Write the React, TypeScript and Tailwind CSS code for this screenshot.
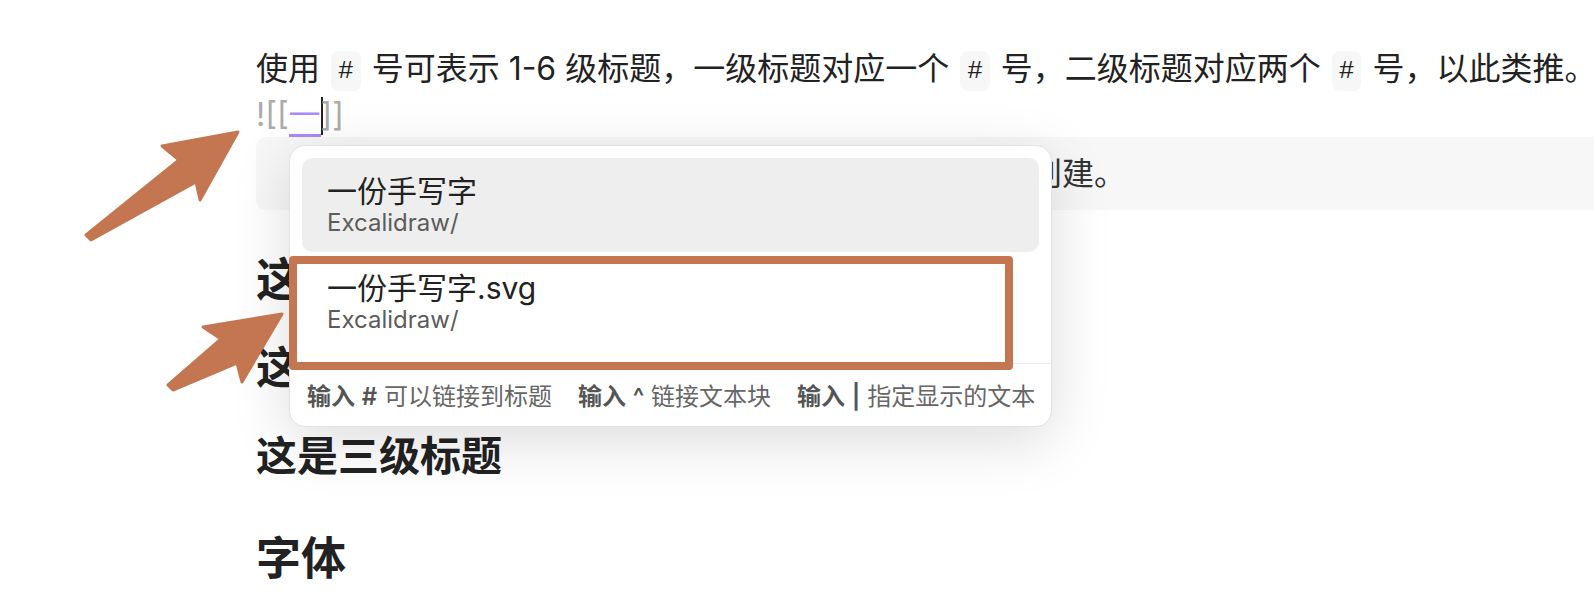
import React from 'react';

const font = { fontFamily: 'Inter, "Noto Sans CJK SC", sans-serif' };

function Code({ children }: { children: React.ReactNode }) {
  return (
    <span className="mx-[2px] inline-flex h-[40px] items-center rounded-[8px] bg-[#f7f7f7] px-[7px] align-middle font-['Liberation_Mono',monospace] text-[26px] text-[#222]">
      {children}
    </span>
  );
}

function SuggestItem({ title, active }: { title: string; active?: boolean }) {
  return (
    <div className={`h-[94px] rounded-[10px] pl-[25px] pt-[15px] ${active ? 'bg-[#eeeeee]' : ''}`}>
      <div className="text-[30px] leading-[36px] text-[#222]">{title}</div>
      <div className="text-[24px] leading-[28px] text-[#5c5c5c]">Excalidraw/</div>
    </div>
  );
}

function Hint({ keyText, label }: { keyText: string; label: string }) {
  return (
    <span className="whitespace-nowrap text-[#666]">
      <span className="font-semibold text-[#555]">输入</span>{' '}
      <span className="font-semibold text-[#555]">{keyText}</span> {label}
    </span>
  );
}

export default function App() {
  return (
    <div className="relative h-[604px] w-[1594px] overflow-hidden bg-white" style={font}>
      {/* document */}
      <div className="pt-[46px] text-[#222]">
        <div className="whitespace-nowrap pl-[256px] text-[32px] leading-[46px]">
          使用 <Code>#</Code> 号可表示 1-6 级标题，一级标题对应一个 <Code>#</Code> 号，二级标题对应两个 <Code>#</Code> 号，以此类推。
        </div>
        <div className="whitespace-nowrap pl-[256px] text-[32px] leading-[46px]">
          <span className="text-[#ababab]">![[</span>
          <span className="border-b-[3px] border-[#a78bfa] text-[#a78bfa]">一</span>
          <span className="-mr-[2px] inline-block h-[38px] w-[2px] bg-[#222] align-[-9px]" />
          <span className="text-[#ababab]">]]</span>
        </div>
        <div className="ml-[256px] -mt-px flex h-[73px] items-center whitespace-nowrap rounded-l-[10px] bg-[#f7f7f7] pl-[38px] text-[32px] text-[#333]">
          如果链接的文件不存在，点击链接后在当前文件夹中创建。
        </div>
        <h1 className="mt-[41px] pl-[256px] text-[46px] font-bold leading-[56px]">这是一级标题</h1>
        <h2 className="mt-[33px] pl-[256px] text-[44px] font-bold leading-[56px]">这是二级标题</h2>
        <h3 className="mt-[34px] pl-[256px] text-[41px] font-bold leading-[52px]">这是三级标题</h3>
        <h3 className="mt-[49px] pl-[256px] text-[45px] font-bold leading-[56px]">字体</h3>
      </div>

      {/* link suggestion popup */}
      <div className="absolute left-[289px] top-[145px] flex h-[282px] w-[763px] flex-col rounded-[16px] border border-[#e2e2e2] bg-white shadow-[0_14px_60px_rgba(0,0,0,0.14)]">
        <div className="flex flex-col gap-[3px] px-[12px] pt-[12px]">
          <SuggestItem title="一份手写字" active />
          <SuggestItem title="一份手写字.svg" />
        </div>
        <div className="mt-auto flex h-[63px] items-center gap-[26px] border-t border-[#ececec] px-[17px] pt-[3px] text-[24px]">
          <Hint keyText="#" label="可以链接到标题" />
          <Hint keyText="^" label="链接文本块" />
          <Hint keyText="|" label="指定显示的文本" />
        </div>
      </div>

      {/* annotation box */}
      <div className="absolute left-[289px] top-[256px] h-[114px] w-[724px] rounded-[4px] border-[8px] border-[#c47650]" />

      {/* annotation arrows */}
      <svg className="pointer-events-none absolute left-0 top-0" width="1594" height="604" viewBox="0 0 1594 604">
        <g fill="#c47650" stroke="#c47650" strokeWidth="3" strokeLinejoin="round">
          <polygon points="86,235 179,160 162,146 238,132 200,200 196,182 91,240" />
          <polygon points="168,385 221,339 203,327 282,314 242,382 237,363 173,390" />
        </g>
      </svg>
    </div>
  );
}
